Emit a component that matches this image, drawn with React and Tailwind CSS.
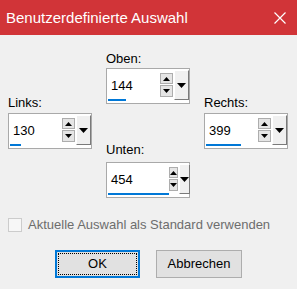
import React from "react";

function SpinBox({ value, bar }) {
  return (
    <div className="flex w-[84px] h-[36px] border border-[#a9a9a9] bg-white">
      <div className="flex flex-col flex-1 pt-[9px]">
        <div className="pl-[4px] text-[13px] leading-[15px] text-black">{value}</div>
        <div className="ml-[1px] mt-[6px] h-[2px] bg-[#0078d7]" style={{ width: bar }} />
      </div>
      <div className="flex flex-col gap-[1px] pt-[4px] w-[13px]">
        <div className="h-[11px] border border-[#adadad] bg-[#e5e5e5] flex items-center justify-center">
          <svg width="7" height="4" viewBox="0 0 7 4"><path d="M0 4 L3.5 0 L7 4 Z" fill="#000" /></svg>
        </div>
        <div className="h-[12px] border border-[#adadad] bg-[#e5e5e5] flex items-center justify-center">
          <svg width="7" height="4" viewBox="0 0 7 4"><path d="M0 0 L3.5 4 L7 0 Z" fill="#000" /></svg>
        </div>
      </div>
      <div className="ml-[1px] mt-[1px] w-[15px] h-[30px] bg-[#f0f0f0] border-l border-l-white border-r border-r-[#7a7a7a] border-b border-b-[#7a7a7a] border-t border-t-white flex items-center justify-center">
        <svg width="9" height="5" viewBox="0 0 9 5"><path d="M0 0 L4.5 5 L9 0 Z" fill="#000" /></svg>
      </div>
    </div>
  );
}

function Field({ label, value, bar, mt }) {
  return (
    <div className="flex flex-col">
      <div className="text-[13px] leading-[15px] text-black">{label}</div>
      <div style={{ marginTop: mt }}>
        <SpinBox value={value} bar={bar} />
      </div>
    </div>
  );
}

export default function App() {
  return (
    <div
      className="w-[297px] h-[289px] bg-[#f0f0f0] flex flex-col overflow-hidden"
      style={{ fontFamily: '"Liberation Sans", Arial, sans-serif' }}
    >
      <div className="h-[35px] bg-[#d13438] flex items-center justify-between pl-[6px] pr-[11px] shrink-0">
        <span className="text-white text-[15px] leading-[18px]">Benutzerdefinierte Auswahl</span>
        <svg width="12" height="12" viewBox="0 0 12 12">
          <path d="M0.5 0.5 L11.5 11.5 M11.5 0.5 L0.5 11.5" stroke="#fff" strokeWidth="1.2" />
        </svg>
      </div>
      <div className="flex pl-[8px] gap-[14px]">
        <div className="pt-[60px]">
          <Field label="Links:" value="130" bar={11} mt={3} />
        </div>
        <div className="flex flex-col pt-[16px]">
          <Field label="Oben:" value="144" bar={18} mt={2} />
          <div className="mt-[38px]">
            <Field label="Unten:" value="454" bar={61} mt={5} />
          </div>
        </div>
        <div className="pt-[60px]">
          <Field label="Rechts:" value="399" bar={35} mt={3} />
        </div>
      </div>
      <div className="flex items-center pl-[8px] mt-[19px] gap-[6px]">
        <div className="w-[14px] h-[14px] border border-[#cccccc] bg-[#f7f7f7]" />
        <span className="text-[13px] leading-[15px] text-[#6d6d6d]">Aktuelle Auswahl als Standard verwenden</span>
      </div>
      <div className="flex justify-center gap-[16px] mt-[18px]">
        <div className="w-[85px] h-[28px] border-2 border-[#0078d7] bg-[#e1e1e1] p-[1px]">
          <div className="w-full h-full border border-dotted border-black flex items-center justify-center text-[13px] text-black">
            OK
          </div>
        </div>
        <div className="w-[86px] h-[28px] border border-[#adadad] bg-[#e1e1e1] flex items-center justify-center text-[13px] text-black">
          Abbrechen
        </div>
      </div>
    </div>
  );
}
